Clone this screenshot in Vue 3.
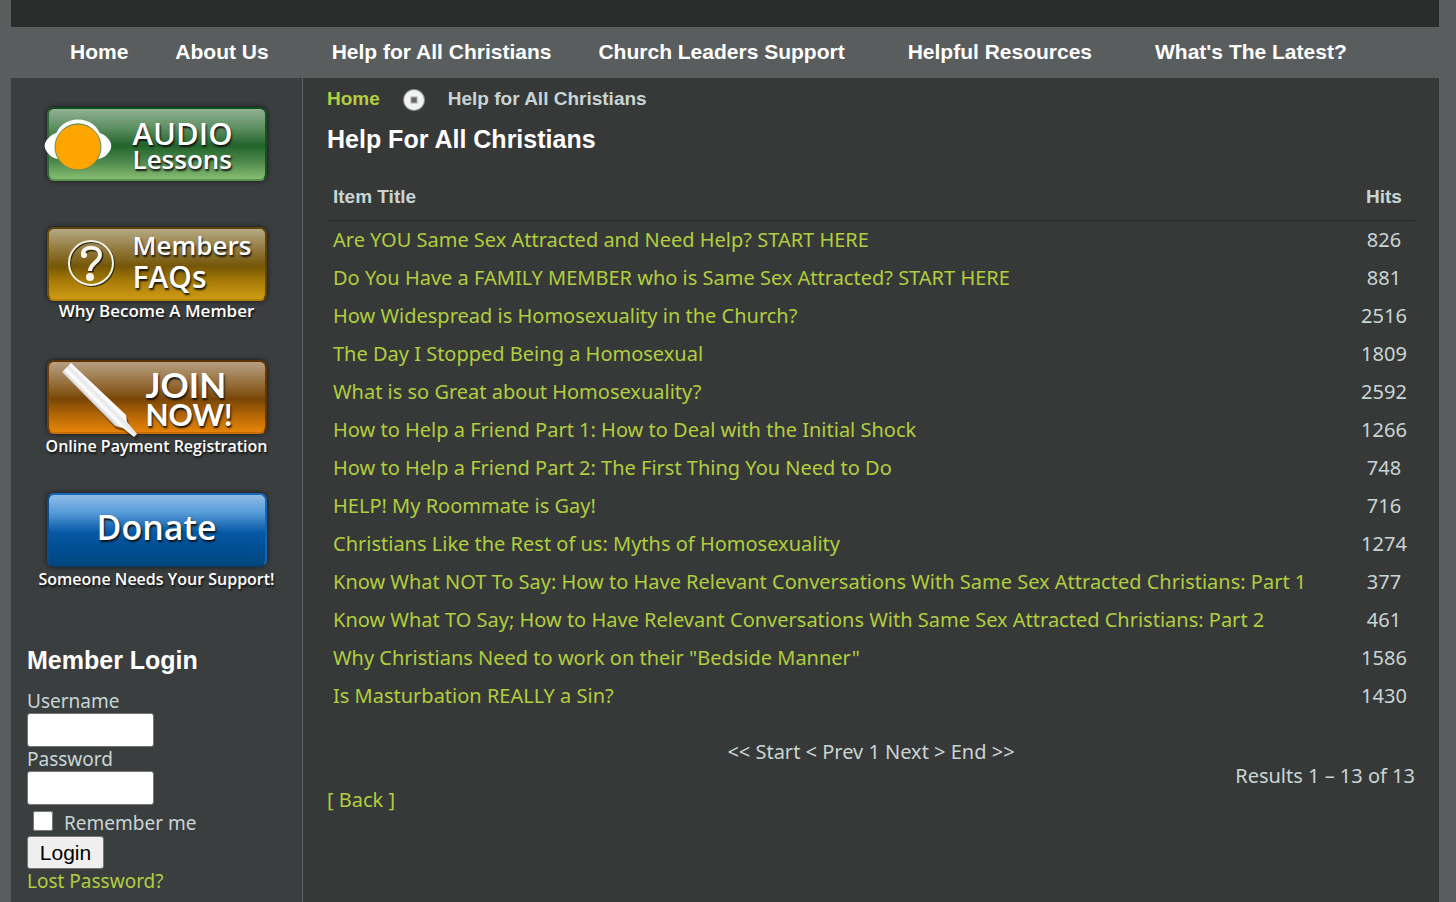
<template>
  <div class="page">
    <header class="page__masthead" />

    <nav class="nav" aria-label="Main">
      <a
        v-for="item in navItems"
        :key="item.label"
        href="#"
        class="nav__link"
        :class="{ 'nav__link--spaced': item.spaced }"
      >{{ item.label }}</a>
    </nav>

    <div class="page__body">
      <aside class="sidebar">
        <div class="banners">
          <a href="#" class="banner banner--audio">
            <span class="banner__button">
              <svg class="banner__icon" viewBox="0 0 220 74" aria-hidden="true">
                <path d="M10 31C14 9 48 9 52 31" fill="none" stroke="#fff" stroke-width="4" />
                <path d="M12 25C4 27 -4 34 -2 41C0 47 5 51 11 52ZM50 25C58 27 66 34 64 41C62 47 57 51 51 52Z" fill="#fff" />
                <circle cx="31" cy="40" r="23" fill="#ffa500" stroke="#5f8f5a" />
              </svg>
              <span class="banner__text">
                <span class="banner__line banner__line--caps">AUDIO</span>
                <span class="banner__line">Lessons</span>
              </span>
            </span>
          </a>

          <a href="#" class="banner banner--faq">
            <span class="banner__button">
              <svg class="banner__icon" viewBox="0 0 220 74" aria-hidden="true">
                <circle cx="45" cy="37" r="22" fill="none" stroke="#2e2a14" stroke-width="2" />
                <circle cx="44" cy="36" r="22" fill="none" stroke="#f5f2e6" stroke-width="2" />
                <path d="M36 27C35 19 53 18 53 28C53 35 43 36 43 44" fill="none" stroke="#2e2a14" stroke-width="5" transform="translate(1 1)" />
                <path d="M36 27C35 19 53 18 53 28C53 35 43 36 43 44" fill="none" stroke="#f8f6ee" stroke-width="4" />
                <circle cx="37" cy="28" r="3" fill="#f8f6ee" />
                <circle cx="43" cy="50" r="4" fill="#f8f6ee" />
              </svg>
              <span class="banner__text">
                <span class="banner__line">Members</span>
                <span class="banner__line banner__line--caps">FAQs</span>
              </span>
            </span>
            <span class="banner__caption banner__caption--large">Why Become A Member</span>
          </a>

          <a href="#" class="banner banner--join">
            <span class="banner__button">
              <svg class="banner__icon" viewBox="0 0 220 74" aria-hidden="true">
                <defs>
                  <linearGradient id="pen" gradientUnits="userSpaceOnUse" x1="42" y1="40" x2="53" y2="29">
                    <stop offset="0" stop-color="#c4c4c4" />
                    <stop offset="0.3" stop-color="#fff" />
                    <stop offset="0.6" stop-color="#e6e6e6" />
                    <stop offset="0.8" stop-color="#fff" />
                  </linearGradient>
                </defs>
                <path d="M18 13L26 4L80 57L81 64L91 75L88 78L76 69L68 67Z" fill="#2d1c08" opacity="0.5" transform="translate(1 2)" />
                <path d="M15 12L24 3L79 55L80 62L90 74L87 77L76 68L68 66Z" fill="url(#pen)" />
              </svg>
              <span class="banner__text">
                <span class="banner__line banner__line--caps">JOIN</span>
                <span class="banner__line">NOW!</span>
              </span>
            </span>
            <span class="banner__caption">Online Payment Registration</span>
          </a>

          <a href="#" class="banner banner--donate">
            <span class="banner__button">
              <span class="banner__text">Donate</span>
            </span>
            <span class="banner__caption">Someone Needs Your Support!</span>
          </a>
        </div>

        <form class="login" @submit.prevent>
          <h2 class="heading">Member Login</h2>
          <label class="login__label" for="username">Username</label>
          <input id="username" v-model="username" class="login__input" type="text">
          <label class="login__label" for="password">Password</label>
          <input id="password" v-model="password" class="login__input" type="password">
          <div class="login__remember">
            <input id="remember" v-model="remember" class="login__check" type="checkbox">
            <label for="remember">Remember me</label>
          </div>
          <button class="login__submit" type="submit">Login</button>
          <a href="#">Lost Password?</a>
        </form>
      </aside>

      <main class="content">
        <div class="crumbs">
          <a href="#">Home</a>
          <svg class="crumbs__icon" viewBox="0 0 24 24" aria-hidden="true">
            <circle cx="12" cy="13" r="11" fill="#8b8d8c" />
            <circle cx="12" cy="13" r="10" fill="#f1f3f2" />
            <rect x="9" y="10" width="6" height="6" fill="#666" stroke="#aaa" />
          </svg>
          <span>Help for All Christians</span>
        </div>
        <h1 class="heading">Help For All Christians</h1>

        <table class="items">
          <thead>
            <tr>
              <th scope="col">Item Title</th>
              <th scope="col" class="items__hits">Hits</th>
            </tr>
          </thead>
          <tbody>
            <tr v-for="item in items" :key="item.title">
              <td><a href="#">{{ item.title }}</a></td>
              <td class="items__hits">{{ item.hits }}</td>
            </tr>
          </tbody>
        </table>

        <div class="pager">&lt;&lt; Start &lt; Prev 1 Next &gt; End &gt;&gt;</div>
        <div class="results">Results 1 – 13 of 13</div>
        <a href="#" class="back">[ Back ]</a>
      </main>
    </div>
  </div>
</template>

<script setup>
import { ref } from 'vue'

const username = ref('')
const password = ref('')
const remember = ref(false)

const navItems = [
  { label: 'Home' },
  { label: 'About Us' },
  { label: 'Help for All Christians', spaced: true },
  { label: 'Church Leaders Support' },
  { label: 'Helpful Resources', spaced: true },
  { label: "What's The Latest?", spaced: true }
]

const items = [
  { title: 'Are YOU Same Sex Attracted and Need Help? START HERE', hits: 826 },
  { title: 'Do You Have a FAMILY MEMBER who is Same Sex Attracted? START HERE', hits: 881 },
  { title: 'How Widespread is Homosexuality in the Church?', hits: 2516 },
  { title: 'The Day I Stopped Being a Homosexual', hits: 1809 },
  { title: 'What is so Great about Homosexuality?', hits: 2592 },
  { title: 'How to Help a Friend Part 1: How to Deal with the Initial Shock', hits: 1266 },
  { title: 'How to Help a Friend Part 2: The First Thing You Need to Do', hits: 748 },
  { title: 'HELP! My Roommate is Gay!', hits: 716 },
  { title: 'Christians Like the Rest of us: Myths of Homosexuality', hits: 1274 },
  { title: 'Know What NOT To Say: How to Have Relevant Conversations With Same Sex Attracted Christians: Part 1', hits: 377 },
  { title: 'Know What TO Say; How to Have Relevant Conversations With Same Sex Attracted Christians: Part 2', hits: 461 },
  { title: 'Why Christians Need to work on their "Bedside Manner"', hits: 1586 },
  { title: 'Is Masturbation REALLY a Sin?', hits: 1430 }
]
</script>

<style>
body {
  margin: 0;
  background: #5a5d5e;
}
</style>

<style scoped>
.page {
  box-sizing: border-box;
  display: flex;
  flex-direction: column;
  min-height: 100vh;
  padding: 0 17px 0 11px;
  color: #c9d5d5;
  font-family: "Lucida Grande", "Noto Sans", sans-serif;
  font-size: 19px;
  line-height: 24px;
}
.page a {
  color: #b0ce3f;
  text-decoration: none;
}
.page__masthead {
  height: 27px;
  background: #2b2d2c;
}
.page__body {
  display: flex;
  flex: 1;
}

.nav {
  display: flex;
  gap: 47px;
  padding: 13px 59px 14px;
  font-family: Arial, "Liberation Sans", sans-serif;
  font-size: 21px;
  font-weight: bold;
  white-space: nowrap;
}
.nav .nav__link {
  color: #fff;
}
.nav__link--spaced {
  margin-left: 16px;
}

.heading {
  margin: 0;
  color: #fff;
  font-family: Arial, "Liberation Sans", sans-serif;
  font-size: 25px;
  line-height: 30px;
}

.sidebar {
  box-sizing: border-box;
  flex: 0 0 292px;
  padding: 29px 16px 8px;
  background: #3b3e3f;
  border-right: 1px solid #646768;
}
.banners {
  display: flex;
  flex-direction: column;
  align-items: center;
  gap: 37px;
}
.page .banner {
  display: flex;
  flex-direction: column;
  align-items: center;
  width: 220px;
  color: #fff;
  font-family: "Open Sans", "Noto Sans", sans-serif;
  font-weight: 600;
  text-shadow: 1px 2px 2px #111;
  white-space: nowrap;
}
.banner__button {
  box-sizing: border-box;
  position: relative;
  display: flex;
  width: 220px;
  height: 74px;
  border: 2px solid;
  border-radius: 7px;
  box-shadow: 0 0 5px #151515;
}
.banner__icon {
  position: absolute;
  inset: -2px;
  overflow: visible;
}
.banner__text {
  position: relative;
  display: flex;
  flex-direction: column;
}
.banner__caption {
  font-size: 16px;
  line-height: 24px;
  margin-bottom: -2px;
}
.banner__caption--large {
  font-size: 17px;
  line-height: 20px;
  margin-bottom: 2px;
}
.banner--audio {
  margin-bottom: 9px;
}
.banner--audio .banner__button {
  padding: 11px 0 0 84px;
  border-color: #104d1c #185222 #59924f #306b37;
  background: linear-gradient(#91b092, #5b8e60 28%, #22642b 52%, #4f8a4d 76%, #87bd72);
}
.banner--audio .banner__line {
  font-size: 26px;
  line-height: 26px;
}
.banner--audio .banner__line--caps {
  font-size: 31px;
}
.banner--faq .banner__button {
  padding-left: 84px;
  border-color: #5c4409 #5c4409 #b5850a #6f5108;
  background: linear-gradient(#b5a983, #91783b 30%, #765708 53%, #a77c07 75%, #cf9b14);
}
.banner--faq .banner__line {
  font-size: 26px;
  line-height: 32px;
}
.banner--faq .banner__line--caps {
  font-size: 30px;
}
.banner--join .banner__button {
  padding: 7px 0 0 97px;
  border-color: #5b3306 #603706 #c66d04 #6f3d05;
  background: linear-gradient(#b59f82, #97703c 30%, #794607 53%, #b26505 75%, #e78407);
}
.banner--join .banner__line {
  font-family: Lato, "Open Sans", sans-serif;
  font-size: 30px;
  font-weight: 700;
  line-height: 30px;
}
.banner--join .banner__line--caps {
  font-size: 35px;
}
.banner--donate .banner__button {
  justify-content: center;
  border-color: #1267bb #1267bb #05406f #084e91;
  background: linear-gradient(#91bce5, #579bd9 25%, #0859a6 53%, #004f94 75%, #004780);
}
.banner--donate .banner__text {
  font-size: 34px;
  line-height: 64px;
}

.login {
  display: flex;
  flex-direction: column;
  align-items: flex-start;
  margin-top: 56px;
}
.login .heading {
  margin-bottom: 14px;
}
.login__input {
  box-sizing: border-box;
  width: 127px;
  height: 34px;
  border: 1px solid #767676;
  border-radius: 3px;
  background: #fff;
  font-size: 19px;
}
.login__remember {
  display: flex;
  gap: 11px;
  padding: 6px 0 1px 6px;
}
.login__check {
  width: 20px;
  height: 20px;
  margin: 0;
}
.login__submit {
  width: 77px;
  height: 33px;
  padding: 0;
  border: 1px solid #767676;
  border-radius: 3px;
  background: #efefef;
  color: #000;
  font-family: Arial, "Liberation Sans", sans-serif;
  font-size: 21px;
}

.content {
  flex: 1;
  min-width: 0;
  padding: 9px 24px 24px;
  background: #373938;
  font-size: 20px;
}
.crumbs {
  display: flex;
  align-items: center;
  gap: 22px;
  margin-bottom: 13px;
  font-family: Arial, "Liberation Sans", sans-serif;
  font-size: 19px;
  font-weight: bold;
}
.crumbs__icon {
  width: 24px;
  height: 24px;
}

.items {
  width: 100%;
  margin-top: 20px;
  border-collapse: collapse;
}
.items th,
.items td {
  padding: 7px 6px;
  text-align: left;
}
.items th {
  padding: 11px 6px;
  border-bottom: 1px solid #262827;
  font-family: Arial, "Liberation Sans", sans-serif;
  font-size: 19px;
}
.items .items__hits {
  width: 50px;
  text-align: center;
}

.pager {
  margin-top: 25px;
  text-align: center;
}
.results {
  text-align: right;
}
</style>
